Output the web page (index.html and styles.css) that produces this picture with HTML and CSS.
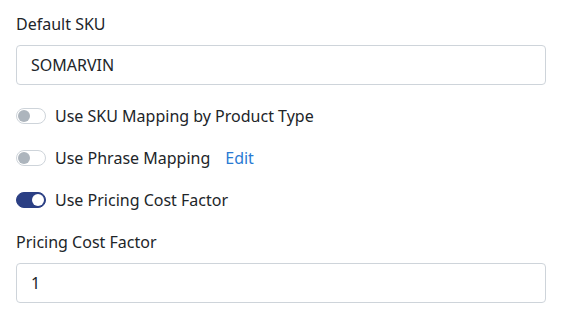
FILE: index.html
```html
<!DOCTYPE html>
<html lang="en">
<head>
  <meta charset="UTF-8" />
  <title>SKU Settings</title>
  <link rel="stylesheet" href="styles.css">
</head>
<body>
  <div class="settings">
    <div class="field">
      <label class="field-label" for="defaultSku">Default SKU</label>
      <input id="defaultSku" class="text-input" type="text" value="SOMARVIN" />
    </div>

    <div class="switch-row">
      <span class="switch"></span>
      <span class="switch-label">Use SKU Mapping by Product Type</span>
    </div>

    <div class="switch-row">
      <span class="switch"></span>
      <span class="switch-label">Use Phrase Mapping</span>
      <a class="edit-link" href="#">Edit</a>
    </div>

    <div class="switch-row">
      <span class="switch on"></span>
      <span class="switch-label">Use Pricing Cost Factor</span>
    </div>

    <div class="field">
      <label class="field-label" for="costFactor">Pricing Cost Factor</label>
      <input id="costFactor" class="text-input" type="text" value="1" />
    </div>
  </div>
</body>
</html>
```

FILE: styles.css
```css
body {
  margin: 0;
  padding: 0;
  font-family: "Noto Sans", "Open Sans", Arial, sans-serif;
  font-size: 16px;
  background: #fff;
  color: #212529;
}

.settings {
  width: 530px;
  padding: 12px 16px 0;
}

.field-label {
  display: block;
  line-height: 24px;
  margin-bottom: 9px;
}

.text-input {
  display: block;
  box-sizing: border-box;
  width: 100%;
  height: 40px;
  padding: 0 14px;
  font-family: inherit;
  font-size: 16px;
  color: #212529;
  border: 1px solid #ced4da;
  border-radius: 4px;
  background: #fff;
}

.field + .switch-row {
  margin-top: 19px;
}

.switch-row {
  display: flex;
  align-items: center;
  height: 24px;
  margin-bottom: 18px;
}

.switch {
  position: relative;
  box-sizing: border-box;
  width: 30px;
  height: 16px;
  border: 1px solid #ced4da;
  border-radius: 8px;
  background: #fff;
  margin-right: 9px;
}

.switch::after {
  content: "";
  position: absolute;
  top: 1px;
  left: 1px;
  width: 12px;
  height: 12px;
  border-radius: 50%;
  background: #adb5bd;
}

.switch.on {
  background: #2b3f84;
  border-color: #2b3f84;
}

.switch.on::after {
  left: auto;
  right: 1px;
  background: #fff;
}

.edit-link {
  margin-left: 15px;
  color: #2a7ad3;
  text-decoration: none;
}
```
